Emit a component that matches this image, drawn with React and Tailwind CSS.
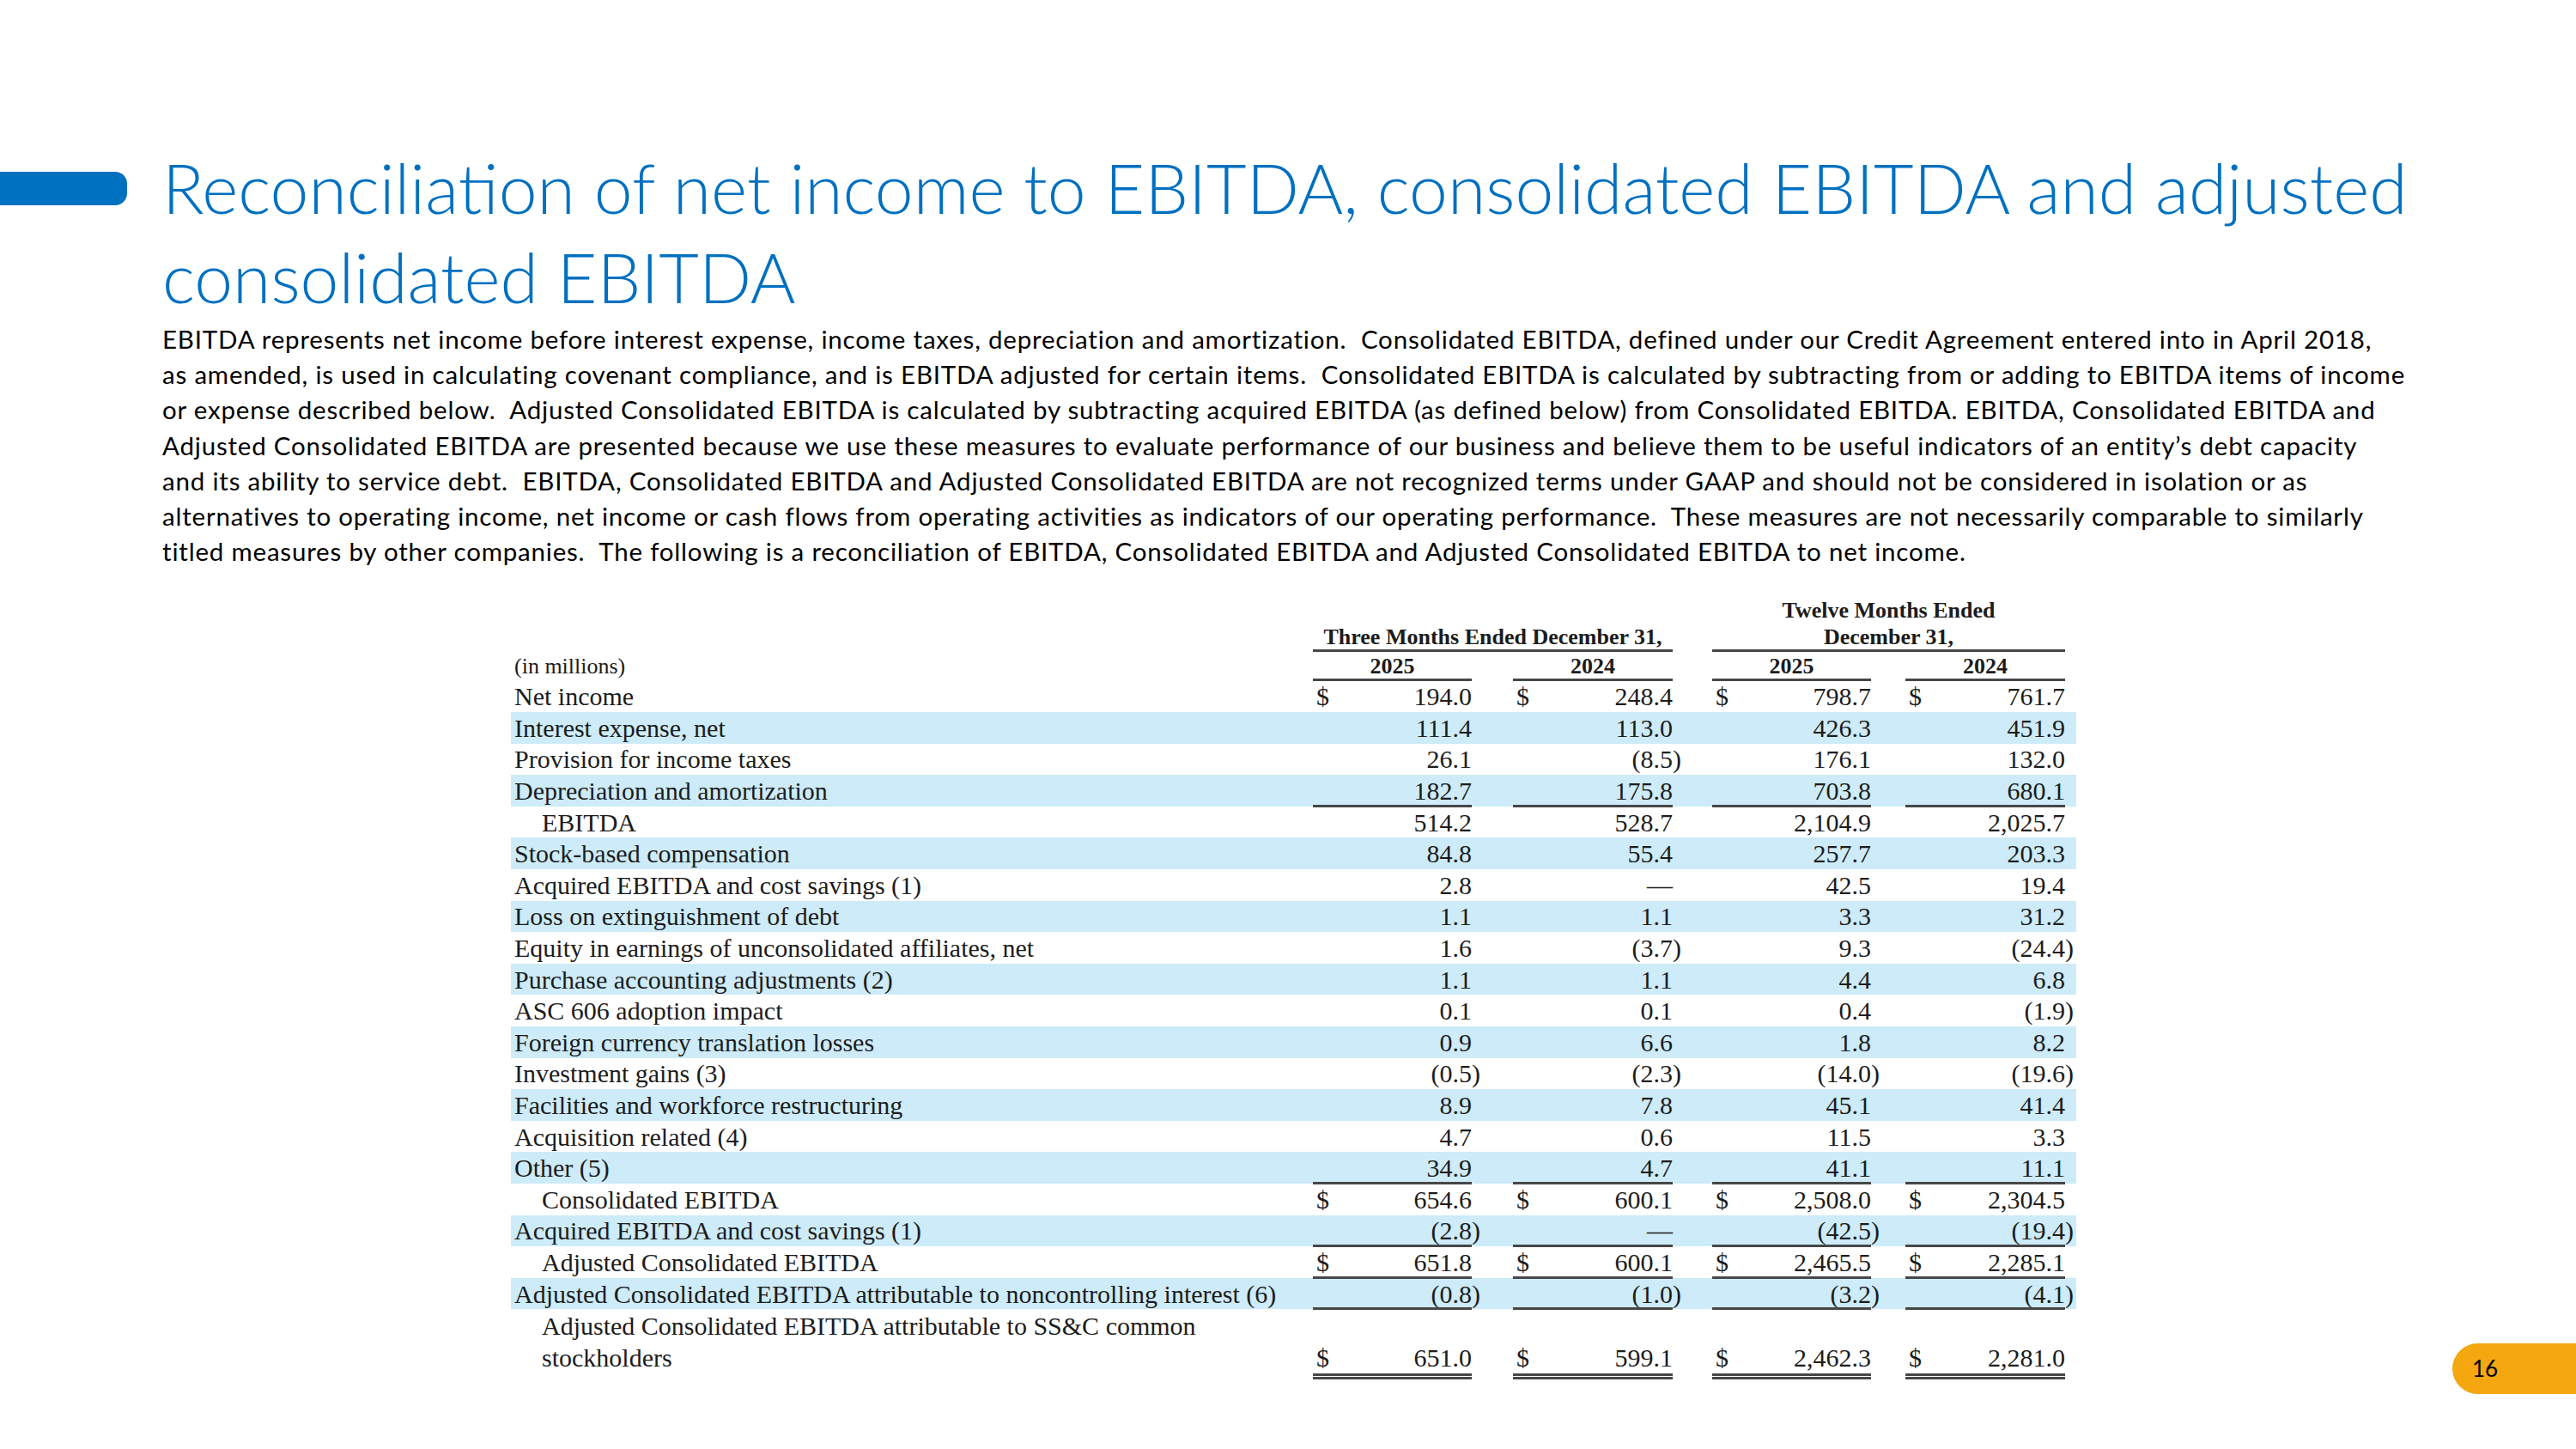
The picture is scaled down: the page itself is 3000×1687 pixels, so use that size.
import React from "react";

const bodyLines = [
  "EBITDA represents net income before interest expense, income taxes, depreciation and amortization.  Consolidated EBITDA, defined under our Credit Agreement entered into in April 2018,",
  "as amended, is used in calculating covenant compliance, and is EBITDA adjusted for certain items.  Consolidated EBITDA is calculated by subtracting from or adding to EBITDA items of income",
  "or expense described below.  Adjusted Consolidated EBITDA is calculated by subtracting acquired EBITDA (as defined below) from Consolidated EBITDA. EBITDA, Consolidated EBITDA and",
  "Adjusted Consolidated EBITDA are presented because we use these measures to evaluate performance of our business and believe them to be useful indicators of an entity\u2019s debt capacity",
  "and its ability to service debt.  EBITDA, Consolidated EBITDA and Adjusted Consolidated EBITDA are not recognized terms under GAAP and should not be considered in isolation or as",
  "alternatives to operating income, net income or cash flows from operating activities as indicators of our operating performance.  These measures are not necessarily comparable to similarly",
  "titled measures by other companies.  The following is a reconciliation of EBITDA, Consolidated EBITDA and Adjusted Consolidated EBITDA to net income.",
];

const rows = [
  { label: "Net income", v: ["194.0", "248.4", "798.7", "761.7"], dollar: true },
  { label: "Interest expense, net", v: ["111.4", "113.0", "426.3", "451.9"], blue: true },
  { label: "Provision for income taxes", v: ["26.1", "(8.5)", "176.1", "132.0"] },
  { label: "Depreciation and amortization", v: ["182.7", "175.8", "703.8", "680.1"], blue: true, line: "single" },
  { label: "EBITDA", v: ["514.2", "528.7", "2,104.9", "2,025.7"], indent: true },
  { label: "Stock-based compensation", v: ["84.8", "55.4", "257.7", "203.3"], blue: true },
  { label: "Acquired EBITDA and cost savings (1)", v: ["2.8", "\u2014", "42.5", "19.4"] },
  { label: "Loss on extinguishment of debt", v: ["1.1", "1.1", "3.3", "31.2"], blue: true },
  { label: "Equity in earnings of unconsolidated affiliates, net", v: ["1.6", "(3.7)", "9.3", "(24.4)"] },
  { label: "Purchase accounting adjustments (2)", v: ["1.1", "1.1", "4.4", "6.8"], blue: true },
  { label: "ASC 606 adoption impact", v: ["0.1", "0.1", "0.4", "(1.9)"] },
  { label: "Foreign currency translation losses", v: ["0.9", "6.6", "1.8", "8.2"], blue: true },
  { label: "Investment gains (3)", v: ["(0.5)", "(2.3)", "(14.0)", "(19.6)"] },
  { label: "Facilities and workforce restructuring", v: ["8.9", "7.8", "45.1", "41.4"], blue: true },
  { label: "Acquisition related (4)", v: ["4.7", "0.6", "11.5", "3.3"] },
  { label: "Other (5)", v: ["34.9", "4.7", "41.1", "11.1"], blue: true, line: "single" },
  { label: "Consolidated EBITDA", v: ["654.6", "600.1", "2,508.0", "2,304.5"], indent: true, dollar: true },
  { label: "Acquired EBITDA and cost savings (1)", v: ["(2.8)", "\u2014", "(42.5)", "(19.4)"], blue: true, line: "single" },
  { label: "Adjusted Consolidated EBITDA", v: ["651.8", "600.1", "2,465.5", "2,285.1"], indent: true, dollar: true, line: "single" },
  { label: "Adjusted Consolidated EBITDA attributable to noncontrolling interest (6)", v: ["(0.8)", "(1.0)", "(3.2)", "(4.1)"], blue: true, line: "single" },
];

const colW = ["w-[185px]", "w-[186px]", "w-[185px]", "w-[186px]"];
const gapW = ["w-[48px]", "w-[46px]", "w-[40px]"];

function Value({ v }) {
  if (v.startsWith("(")) {
    return (
      <span className="whitespace-nowrap">
        {v.slice(0, -1)}
        <span className="inline-block w-0 overflow-visible">)</span>
      </span>
    );
  }
  return <span className="whitespace-nowrap">{v}</span>;
}

function Cell({ i, v, dollar, line, end }) {
  return (
    <div className={`${colW[i]} h-full relative flex ${end ? "items-end leading-[32.6px]" : "items-center"} justify-between shrink-0`}>
      <span className="pl-[4px]">{dollar ? "$" : ""}</span>
      <Value v={v} />
      {line === "single" && <div className="absolute left-0 right-0 bottom-[-1px] h-[3px] bg-[#474747]" />}
      {line === "double" && <div className="absolute left-0 right-0 bottom-[-9px] h-[7px] border-y-[3px] border-[#474747]" />}
    </div>
  );
}

function Row({ r }) {
  return (
    <div className={`flex h-[36.6px] items-center ${r.blue ? "bg-[#cdebf8]" : ""}`}>
      <div className={`w-[934px] shrink-0 whitespace-nowrap ${r.indent ? "pl-[36px]" : "pl-[4px]"}`}>{r.label}</div>
      {r.v.map((v, i) => (
        <React.Fragment key={i}>
          <Cell i={i} v={v} dollar={r.dollar} line={r.line} />
          {i < 3 && <div className={`${gapW[i]} shrink-0`} />}
        </React.Fragment>
      ))}
      <div className="w-[13px] shrink-0" />
    </div>
  );
}

export default function App() {
  return (
    <div className="w-[3000px] h-[1687px] bg-white relative overflow-hidden">
      <div className="flex pt-[166px]">
        <div className="w-[148px] h-[39px] bg-[#0070c0] rounded-r-[14px] mt-[34px] shrink-0" />
        <div className="ml-[41px]">
          <div className="font-['Lato',sans-serif] font-light text-[80.5px] leading-[104px] text-[#0070c0]">
            <div className="whitespace-nowrap">Reconciliation of net income to EBITDA, consolidated EBITDA and adjusted</div>
            <div className="whitespace-nowrap">consolidated EBITDA</div>
          </div>
          <div className="font-['Lato',sans-serif] text-[29.5px] tracking-[0.8px] leading-[41.2px] text-black">
            {bodyLines.map((l, i) => (
              <div key={i} className="whitespace-pre">{l}</div>
            ))}
          </div>
        </div>
      </div>

      <div className="ml-[595px] mt-[33px] w-[1823px] font-['Liberation_Serif',serif] text-[30px] text-[#1c1c1c]">
        <div className="flex h-[31px] items-center font-bold text-[26px]">
          <div className="w-[934px] shrink-0" />
          <div className="w-[419px] shrink-0" />
          <div className="w-[46px] shrink-0" />
          <div className="w-[411px] shrink-0 text-center whitespace-nowrap">Twelve Months Ended</div>
        </div>
        <div className="flex h-[30px] items-center font-bold text-[26px]">
          <div className="w-[934px] shrink-0" />
          <div className="w-[419px] shrink-0 text-center whitespace-nowrap">Three Months Ended December 31,</div>
          <div className="w-[46px] shrink-0" />
          <div className="w-[411px] shrink-0 text-center whitespace-nowrap">December 31,</div>
        </div>
        <div className="flex h-[3px]">
          <div className="w-[934px] shrink-0" />
          <div className="w-[419px] shrink-0 bg-[#474747]" />
          <div className="w-[46px] shrink-0" />
          <div className="w-[411px] shrink-0 bg-[#474747]" />
        </div>
        <div className="flex h-[33px] items-center text-[26px]">
          <div className="w-[934px] shrink-0 pl-[4px] whitespace-nowrap">(in millions)</div>
          {["2025", "2024", "2025", "2024"].map((y, i) => (
            <React.Fragment key={i}>
              <div className={`${colW[i]} h-full shrink-0 relative flex items-center justify-center font-bold`}>
                {y}
                <div className="absolute left-0 right-0 bottom-[-1px] h-[3px] bg-[#474747]" />
              </div>
              {i < 3 && <div className={`${gapW[i]} shrink-0`} />}
            </React.Fragment>
          ))}
        </div>
        {rows.map((r, i) => (
          <Row key={i} r={r} />
        ))}
        <div className="flex h-[73.2px]">
          <div className="w-[934px] shrink-0 pl-[36px] leading-[36.6px] pt-[2px]">
            <div className="whitespace-nowrap">Adjusted Consolidated EBITDA attributable to SS&amp;C common</div>
            <div className="whitespace-nowrap">stockholders</div>
          </div>
          {["651.0", "599.1", "2,462.3", "2,281.0"].map((v, i) => (
            <React.Fragment key={i}>
              <Cell i={i} v={v} dollar line="double" end />
              {i < 3 && <div className={`${gapW[i]} shrink-0`} />}
            </React.Fragment>
          ))}
        </div>
      </div>

      <div className="absolute left-[2856px] top-[1564px] w-[144px] h-[59px] bg-[#f4a70f] rounded-l-full flex items-center pl-[23px] font-['Lato',sans-serif] text-[26px] text-black">
        16
      </div>
    </div>
  );
}
